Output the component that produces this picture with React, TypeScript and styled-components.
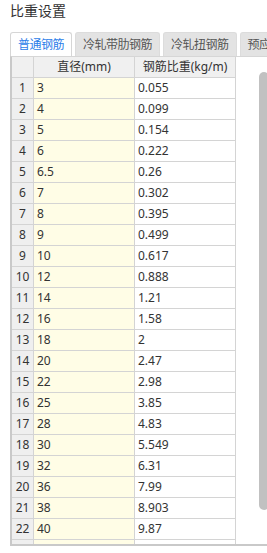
import React from "react";
import styled, { createGlobalStyle } from "styled-components";

const GlobalStyle = createGlobalStyle`
  html, body {
    margin: 0;
    padding: 0;
    background: #ffffff;
  }
  body {
    width: 267px;
    height: 553px;
    overflow: hidden;
    font-family: "Noto Sans", "Noto Sans CJK SC", sans-serif;
    color: #333333;
  }
  * { box-sizing: border-box; }
`;

const Page = styled.div`
  width: 267px;
  height: 553px;
  overflow: hidden;
  display: flex;
  flex-direction: column;
`;

const Title = styled.div`
  height: 32px;
  padding: 1px 0 0 10px;
  font-size: 14px;
  line-height: 20px;
  color: #333333;
  white-space: nowrap;
`;

const TabStrip = styled.div`
  display: flex;
  gap: 3px;
  padding-left: 10px;
  height: 24px;
  white-space: nowrap;
`;

const Tab = styled.div<{ $active?: boolean }>`
  flex: none;
  height: 24px;
  padding: 0 7px;
  border: 1px solid ${(p) => (p.$active ? "#d6d6d6" : "#dcdcdc")};
  border-bottom: none;
  border-radius: 3px 3px 0 0;
  background: ${(p) => (p.$active ? "#ffffff" : "#e3e3e3")};
  color: ${(p) => (p.$active ? "#2b7de9" : "#555555")};
  font-size: 12px;
  letter-spacing: -0.5px;
  line-height: 23px;
`;

const Panel = styled.div`
  margin-left: 10px;
  width: 300px;
  height: 490px;
  border-top: 1px solid #d6d6d6;
  border-left: 2px solid #c9c9c9;
  border-bottom: 2px solid #c9c9c9;
  display: flex;
  overflow: hidden;
  background: #ffffff;
`;

const Table = styled.div`
  flex: none;
  width: 224px;
  display: flex;
  flex-direction: column;
`;

const Row = styled.div`
  flex: none;
  display: grid;
  grid-template-columns: 22px 101px 101px;
  height: 21px;
`;

const Cell = styled.div<{ $kind: "num" | "dia" | "val"; $header?: boolean }>`
  height: 21px;
  border-right: 1px solid #d4d4d4;
  border-bottom: 1px solid #d4d4d4;
  font-size: 12px;
  line-height: 20px;
  white-space: nowrap;
  overflow: hidden;
  color: #333333;
  text-align: ${(p) => (p.$header || p.$kind === "num" ? "center" : "left")};
  padding: ${(p) => (p.$header || p.$kind === "num" ? "0" : "0 0 0 3px")};
  background: ${(p) =>
    p.$header
      ? "#f0f0f0"
      : p.$kind === "num"
      ? "#efefef"
      : p.$kind === "dia"
      ? "#fffde6"
      : "#ffffff"};
`;

const ScrollArea = styled.div`
  flex: 1;
  padding: 15px 0 0 23px;
`;

const Thumb = styled.div`
  width: 10px;
  height: 438px;
  border-radius: 5px;
  background: #c1c1c1;
`;

const rows: [string, string][] = [
  ["3", "0.055"],
  ["4", "0.099"],
  ["5", "0.154"],
  ["6", "0.222"],
  ["6.5", "0.26"],
  ["7", "0.302"],
  ["8", "0.395"],
  ["9", "0.499"],
  ["10", "0.617"],
  ["12", "0.888"],
  ["14", "1.21"],
  ["16", "1.58"],
  ["18", "2"],
  ["20", "2.47"],
  ["22", "2.98"],
  ["25", "3.85"],
  ["28", "4.83"],
  ["30", "5.549"],
  ["32", "6.31"],
  ["36", "7.99"],
  ["38", "8.903"],
  ["40", "9.87"],
  ["", ""],
];

const tabs = ["普通钢筋", "冷轧带肋钢筋", "冷轧扭钢筋", "预应力钢筋"];

export default function App() {
  return (
    <Page>
      <GlobalStyle />
      <Title>比重设置</Title>
      <TabStrip>
        {tabs.map((t, i) => (
          <Tab key={t} $active={i === 0}>
            {t}
          </Tab>
        ))}
      </TabStrip>
      <Panel>
        <Table>
          <Row>
            <Cell $kind="num" $header />
            <Cell $kind="dia" $header>
              直径(mm)
            </Cell>
            <Cell $kind="val" $header>
              钢筋比重(kg/m)
            </Cell>
          </Row>
          {rows.map(([d, v], i) => (
            <Row key={i}>
              <Cell $kind="num">{d ? i + 1 : ""}</Cell>
              <Cell $kind="dia">{d}</Cell>
              <Cell $kind="val">{v}</Cell>
            </Row>
          ))}
        </Table>
        <ScrollArea>
          <Thumb />
        </ScrollArea>
      </Panel>
    </Page>
  );
}
